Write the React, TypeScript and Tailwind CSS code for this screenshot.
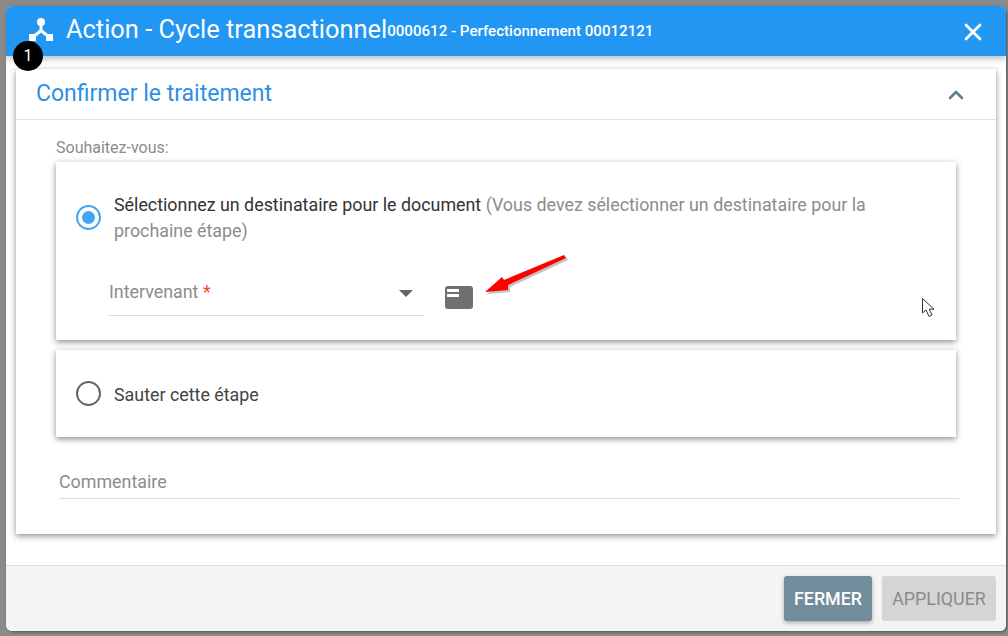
import { X, ChevronUp } from 'lucide-react'

function Radio({ checked }: { checked?: boolean }) {
  return (
    <div
      className={`w-[25px] h-[25px] rounded-full border-2 flex items-center justify-center shrink-0 ${
        checked ? 'border-[#42a5f5]' : 'border-[#666666]'
      }`}
    >
      {checked && <div className="w-[13px] h-[13px] rounded-full bg-[#42a5f5]" />}
    </div>
  )
}

export default function App() {
  return (
    <div className="relative w-[1008px] h-[636px] overflow-hidden bg-[#8a8a8a] pt-[6px] pl-[6px] font-['Roboto',sans-serif]">
      <div className="w-[1000px] h-[625px] rounded-[6px] overflow-hidden bg-white flex flex-col shadow-[1px_1px_3px_rgba(0,0,0,0.4)]">
        {/* Header */}
        <div className="h-[50px] shrink-0 bg-[#2196f3] flex items-center pl-[22px] pr-[19px] text-white shadow-[0_3px_6px_rgba(0,0,0,0.25)] relative">
          <svg width="26" height="26" viewBox="0 0 26 26" className="mt-[-4px] shrink-0" fill="white">
            <circle cx="13" cy="6" r="4" />
            <path d="M13 9v6M13 14.5L5 21M13 14.5L21 21" stroke="white" strokeWidth="3" fill="none" />
            <rect x="1" y="18" width="7" height="7" />
            <rect x="18" y="18" width="7" height="7" />
          </svg>
          <span className="ml-[12px] mt-[-2px] text-[25.4px] leading-none whitespace-nowrap">Action - Cycle transactionnel</span>
          <span className="text-[15.1px] font-medium leading-none whitespace-nowrap mt-[2px]">0000612 - Perfectionnement 00012121</span>
          <X className="ml-auto mt-[1px] text-white" size={28} strokeWidth={2.4} />
        </div>

        {/* Body */}
        <div className="flex-1 bg-white px-[10px] pt-[13px]">
          <div className="h-[465px] bg-white shadow-[0_2px_6px_rgba(0,0,0,0.45)]">
            <div className="h-[51px] border-b border-[#e0e0e0] flex items-center pl-[20px] pr-[28px]">
              <span className="text-[23px] leading-none text-[#2e8fe6] mt-[-2px]">Confirmer le traitement</span>
              <ChevronUp className="ml-auto mt-[2px] text-[#607d8b]" size={24} strokeWidth={2.6} />
            </div>
            <div className="pl-[40px] pr-[40px] pt-[20px]">
              <div className="text-[16px] leading-[16px] text-[#8c8c8c]">Souhaitez-vous:</div>
              <div className="mt-[6px] h-[178px] bg-white shadow-[0_2px_6px_rgba(0,0,0,0.45)] pl-[20px] pr-[20px] pt-[30px]">
                <div className="flex items-start gap-[13px]">
                  <div className="mt-[13px]">
                    <Radio checked />
                  </div>
                  <div className="text-[17.85px] leading-[26px] text-[#8c8c8c]">
                    <span className="text-[#333333]">Sélectionnez un destinataire pour le document</span> (Vous devez sélectionner un destinataire pour la prochaine étape)
                  </div>
                </div>
                <div className="flex items-center mt-[22px] pl-[33px]">
                  <div className="w-[315px] h-[50px] border-b border-[#dcdcdc] flex items-center pt-[4px]">
                    <span className="text-[17.85px] text-[#8c8c8c]">
                      Intervenant <span className="text-[#f44336]">*</span>
                    </span>
                    <div className="ml-auto mr-[11px] mt-[2px] w-0 h-0 border-x-[7px] border-x-transparent border-t-[7px] border-t-[#666666]" />
                  </div>
                  <div className="ml-[21px] mt-[12px] w-[28px] h-[23px] rounded-[3px] bg-[#707070] pl-[2px] pt-[3px]">
                    <div className="w-[12px] h-[3px] bg-white" />
                    <div className="w-[12px] h-[3px] bg-white mt-[2px]" />
                  </div>
                </div>
              </div>
              <div className="mt-[10px] h-[87px] bg-white shadow-[0_2px_6px_rgba(0,0,0,0.45)] pl-[20px] flex items-center gap-[13px]">
                <Radio />
                <span className="text-[17.85px] text-[#444444] mt-[4px]">Sauter cette étape</span>
              </div>
              <div className="mt-[25px] ml-[3px] h-[37px] border-b border-[#dcdcdc] text-[17.85px] text-[#8c8c8c] leading-[40px] w-[900px] -mr-[3px]">
                Commentaire
              </div>
            </div>
          </div>
        </div>

        {/* Footer */}
        <div className="h-[66px] shrink-0 bg-[#f4f4f4] border-t border-[#dcdcdc] flex items-start justify-end gap-[10px] pt-[10px] pr-[10px]">
          <button className="w-[88px] h-[45px] pt-[2px] rounded-[3px] bg-[#718c9a] text-white font-medium text-[17.85px] shadow-[0_2px_4px_rgba(0,0,0,0.3)]">FERMER</button>
          <button className="w-[114px] h-[45px] pt-[2px] rounded-[3px] bg-[#d5d5d5] text-[#8a8a8a] text-[17.85px]">APPLIQUER</button>
        </div>
      </div>

      {/* Step badge */}
      <div className="absolute left-[13px] top-[41px] w-[30px] h-[30px] rounded-full bg-black text-white text-[16px] flex items-center justify-center">
        1
      </div>

      {/* Red arrow */}
      <svg className="absolute left-[480px] top-[247px]" width="92" height="50" viewBox="0 0 92 50">
        <g fill="#666666" opacity="0.4" transform="translate(2 2)">
          <path d="M5 45 L22 30 L24 33 L84 8 L86 11 L28 38 L28 43 Z" />
        </g>
        <path d="M5 45 L22 30 L24 33 L84 8 L86 11 L28 38 L28 43 Z" fill="#ff0000" />
      </svg>

      {/* Mouse cursor */}
      <svg className="absolute left-[921px] top-[297px]" width="16" height="22" viewBox="0 0 16 22">
        <path d="M1.5 1.5 V16 L5 13 L8 19.5 L11 18 L8.2 12.2 H13 Z" fill="white" stroke="#333333" strokeWidth="1" />
      </svg>
    </div>
  )
}
